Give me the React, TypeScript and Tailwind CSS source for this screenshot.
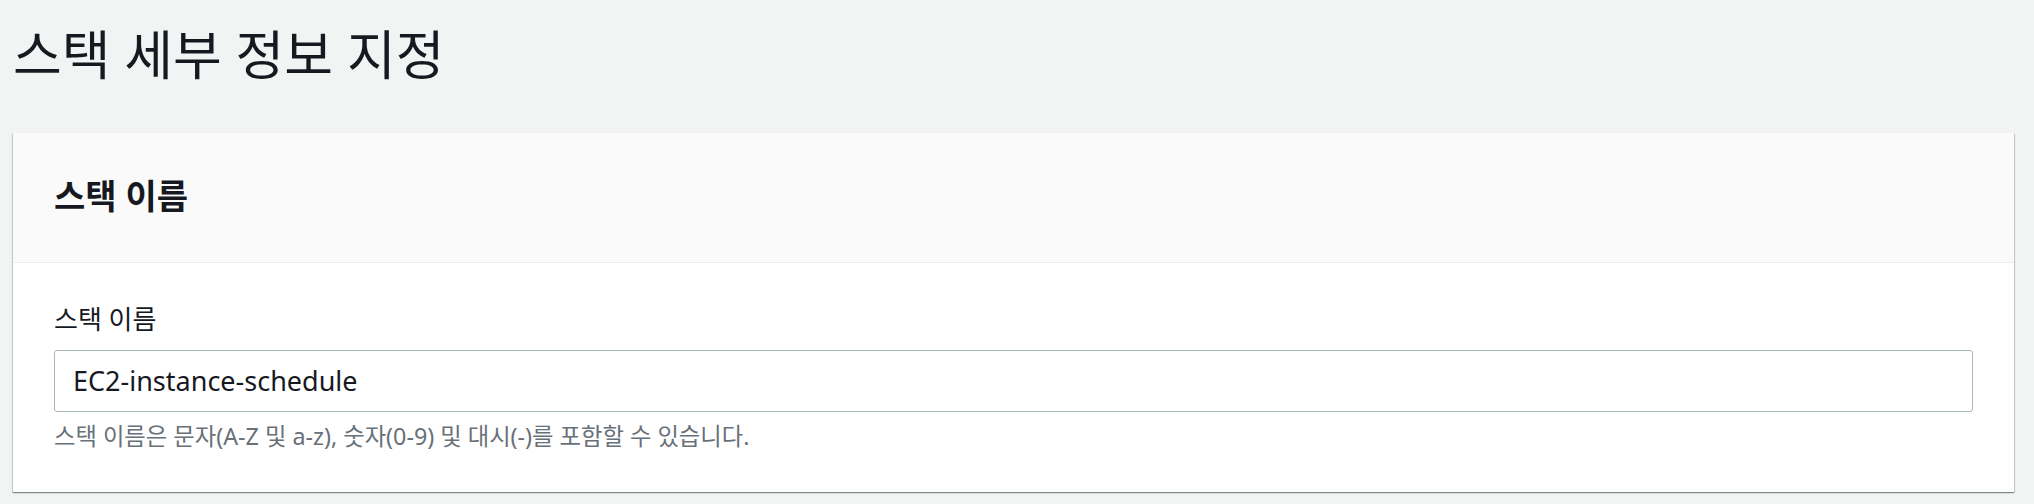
export default function App() {
  return (
    <div
      className="min-h-[504px] bg-[#f2f3f3] text-[#16191f]"
      style={{ fontFamily: '"Noto Sans", "Noto Sans CJK KR", sans-serif' }}
    >
      {/* Page title */}
      <h1 className="pl-[13px] pt-[25px] text-[53px] leading-[60px] font-normal">스택 세부 정보 지정</h1>

      {/* Stack name card */}
      <div className="ml-[13px] mr-[20px] mt-[48px] bg-white shadow-[0_1px_1px_0_rgba(0,28,36,0.3),1px_1px_1px_0_rgba(0,28,36,0.15),-1px_1px_1px_0_rgba(0,28,36,0.15)]">
        <div className="flex h-[130px] items-center border-b border-[#eaeded] bg-[#fafafa] px-[41px]">
          <h2 className="text-[34px] font-bold leading-[40px] -mt-[4px]">스택 이름</h2>
        </div>
        <div className="px-[41px] pt-[41px] pb-[42px]">
          <label className="block text-[26px] leading-[30px] mb-[16px]">스택 이름</label>
          <div className="flex h-[62px] items-center rounded-[3px] border border-[#aab7b8] px-[18px]">
            <span className="text-[27px] leading-[32px]">EC2-instance-schedule</span>
          </div>
          <p className="mt-[10px] text-[23.3px] leading-[28px] text-[#687078]">
            스택 이름은 문자(A-Z 및 a-z), 숫자(0-9) 및 대시(-)를 포함할 수 있습니다.
          </p>
        </div>
      </div>
    </div>
  );
}
